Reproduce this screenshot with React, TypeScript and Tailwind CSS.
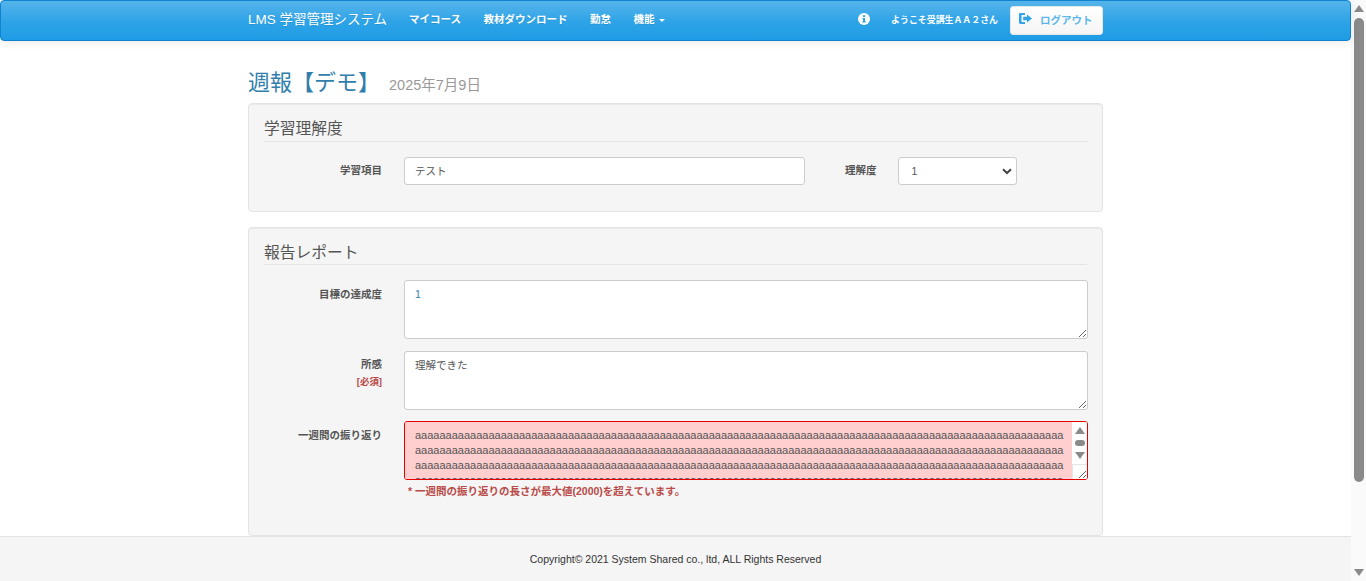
const longText = "a".repeat(2120);

function NavLink({ children }: { children: React.ReactNode }) {
  return <a className="text-[10.5px] font-bold text-white [text-shadow:0_1px_0_rgba(0,0,0,0.1)]">{children}</a>;
}

function InfoIcon() {
  return (
    <svg width="12" height="12" viewBox="0 0 12 12" className="text-white">
      <circle cx="6" cy="6" r="6" fill="currentColor" />
      <rect x="5" y="2.2" width="2" height="1.8" fill="#2fa4e7" />
      <path d="M4.4 5h2.7v3.6h.7v1H4.3v-1H5V6h-.6z" fill="#2fa4e7" />
    </svg>
  );
}

function LogoutIcon() {
  return (
    <svg width="13" height="11" viewBox="0 0 13 11" className="text-[#2fa4e7]">
      <path d="M1.4 0H6v2H2.5v7H6v2H1.4C.6 11 0 10.4 0 9.6V1.4C0 .6.6 0 1.4 0z" fill="currentColor" />
      <path d="M8 1.6 13 5.5 8 9.4V7.3H4.2V3.7H8z" fill="currentColor" />
    </svg>
  );
}

function Panel({ title, children, className, headingClass }: { title: string; children: React.ReactNode; className: string; headingClass: string }) {
  return (
    <section className={`rounded-[4px] border border-[#e3e3e3] bg-[#f5f5f5] px-[15px] pt-[15px] shadow-[inset_0_1px_1px_rgba(0,0,0,0.05)] ${className}`}>
      <h2 className={`border-b border-[#e5e5e5] text-[15.75px] leading-[19px] text-[#555] ${headingClass}`}>{title}</h2>
      {children}
    </section>
  );
}

function Label({ children }: { children: React.ReactNode }) {
  return <div className="w-[118px] shrink-0 text-right text-[10.5px] font-bold leading-[15px] text-[#555]">{children}</div>;
}

function Triangle({ up }: { up?: boolean }) {
  return (
    <svg width="10" height="7" viewBox="0 0 10 7" className="text-[#8a8a8a]">
      <path d={up ? "M5 0 10 7H0z" : "M0 0h10L5 7z"} fill="currentColor" />
    </svg>
  );
}

function ErrorTextarea() {
  return (
    <div className="relative h-[59px] overflow-hidden rounded-[3px] border border-[#e60000]">
      <textarea
        readOnly
        value={longText}
        className="block h-full w-full resize-none overflow-hidden bg-[#ffcfcf] pl-[10px] pr-[21px] pt-[6px] text-[11px] leading-[15px] text-[#555] outline-none [overflow-wrap:anywhere]"
      />
      <div className="absolute right-0 top-0 flex h-full w-[15px] flex-col items-center bg-white pt-[5px]">
        <Triangle up />
        <div className="mt-[6px] h-[6px] w-[10px] rounded-full bg-[#8a8a8a]" />
        <div className="mt-[6px]">
          <Triangle />
        </div>
      </div>
      <div className="absolute bottom-0 right-0 h-[15px] w-[15px] border-l border-t border-[#e5e5e5] bg-white">
        <svg width="14" height="14" viewBox="0 0 14 14">
          <path d="M6 13 13 6M10 13l3-3" stroke="#666" strokeWidth="1" fill="none" />
        </svg>
      </div>
    </div>
  );
}

export default function App() {
  return (
    <div className="flex h-[581px] overflow-hidden bg-white font-['Liberation_Sans','Noto_Sans_CJK_JP',sans-serif] text-[#555]">
      <div className="flex min-w-0 flex-1 flex-col">
        <nav className="z-10 h-[41px] shrink-0 rounded-[4px] border border-[#1082cf] bg-gradient-to-b from-[#54b4eb] via-[#2fa4e7] to-[#1d9ce5] shadow-[0_1px_10px_rgba(0,0,0,0.1)]">
          <div className="mx-auto flex h-full w-[855px] items-center">
            <span className="-mt-[1px] w-[161px] text-[13.5px] text-white [text-shadow:0_1px_0_rgba(0,0,0,0.1)]">LMS 学習管理システム</span>
            <div className="-mt-[1px] flex items-center gap-[22.5px]">
              <NavLink>マイコース</NavLink>
              <NavLink>教材ダウンロード</NavLink>
              <NavLink>勤怠</NavLink>
              <span className="flex items-center gap-[5px]">
                <NavLink>機能</NavLink>
                <span className="mt-[1px] h-0 w-0 border-x-[3px] border-t-[3px] border-x-transparent border-t-white" />
              </span>
            </div>
            <div className="ml-auto flex items-center">
              <div className="-mt-[3px] mr-[21px]">
                <InfoIcon />
              </div>
              <span className="mr-[12px] text-[8.925px] font-bold text-white">ようこそ受講生ＡＡ２さん</span>
              <button className="flex h-[29px] w-[93px] items-center rounded-[3px] border border-[#e6e6e6] bg-gradient-to-b from-white to-[#f5f5f5] pl-[8px] text-[10.5px] font-bold text-[#5cb6ea]">
                <span className="-mt-[4px] w-[21px]">
                  <LogoutIcon />
                </span>
                ログアウト
              </button>
            </div>
          </div>
        </nav>

        <main className="mx-auto w-[855px] min-h-0 flex-1 overflow-hidden">
          <div className="flex h-[62px] items-center pt-[23px]">
            <h1 className="-mt-[2px] text-[22px] leading-none text-[#317eac]">週報【デモ】</h1>
            <small className="ml-[9px] mt-[3px] text-[14.5px] leading-none text-[#999]">2025年7月9日</small>
          </div>

          <Panel title="学習理解度" className="mb-[15px] h-[109px]" headingClass="h-[23px]">
            <div className="mt-[15px] flex items-start">
              <div className="pt-[6px]">
                <Label>学習項目</Label>
              </div>
              <div className="ml-[22px] flex h-[28px] w-[401px] items-center rounded-[3px] border border-[#ccc] bg-white pl-[10px] pt-[1px] text-[10.5px]">テスト</div>
              <div className="ml-[40px] pt-[6px] text-[10.5px] font-bold leading-[15px]">理解度</div>
              <div className="ml-[21px] flex h-[28px] w-[119px] items-center justify-between rounded-[3px] border border-[#ccc] bg-white pl-[13px] pr-[4px] pt-[1px] text-[10.5px]">
                1
                <svg width="10" height="7" viewBox="0 0 10 7">
                  <path d="M1 1.2 5 5l4-3.8" stroke="#444" strokeWidth="2" fill="none" />
                </svg>
              </div>
            </div>
          </Panel>

          <Panel title="報告レポート" className="h-[309px]" headingClass="h-[22px]">
            <div className="mt-[15px] flex items-start">
              <div className="pt-[7px]">
                <Label>目標の達成度</Label>
              </div>
              <textarea
                readOnly
                value="1"
                className="ml-[22px] block h-[59px] w-[684px] shrink-0 rounded-[3px] border border-[#ccc] bg-white px-[10px] py-[6px] text-[10.5px] leading-[15px] text-[#317eac] outline-none"
              />
            </div>
            <div className="mt-[12px] flex items-start">
              <div className="pt-[6px]">
                <Label>
                  所感
                  <br />
                  <span className="mt-[2px] block text-[9.45px] text-[#b94a48]">[必須]</span>
                </Label>
              </div>
              <textarea
                readOnly
                value="理解できた"
                className="ml-[22px] block h-[59px] w-[684px] shrink-0 rounded-[3px] border border-[#ccc] bg-white px-[10px] py-[6px] text-[10.5px] leading-[15px] text-[#555] outline-none"
              />
            </div>
            <div className="mt-[11px] flex items-start">
              <div className="pt-[7px]">
                <Label>一週間の振り返り</Label>
              </div>
              <div className="ml-[22px] w-[684px] shrink-0">
                <ErrorTextarea />
                <p className="mt-[4px] pl-[4px] text-[10.5px] font-bold leading-[15px] text-[#b94a48]">* 一週間の振り返りの長さが最大値(2000)を超えています。</p>
              </div>
            </div>
          </Panel>
        </main>

        <footer className="flex h-[45px] shrink-0 items-center justify-center border-t border-[#e3e3e3] bg-[#f5f5f5] pt-[1px] text-[10.5px] text-[#333]">
          Copyright© 2021 System Shared co., ltd, ALL Rights Reserved
        </footer>
      </div>

      <aside className="flex w-[15px] shrink-0 flex-col items-center bg-[#fafafa] pt-[5px]">
        <Triangle up />
        <div className="mt-[6px] h-[464px] w-[10px] rounded-full bg-[#8a8a8a]" />
        <div className="mt-auto pb-[5px]">
          <Triangle />
        </div>
      </aside>
    </div>
  );
}
